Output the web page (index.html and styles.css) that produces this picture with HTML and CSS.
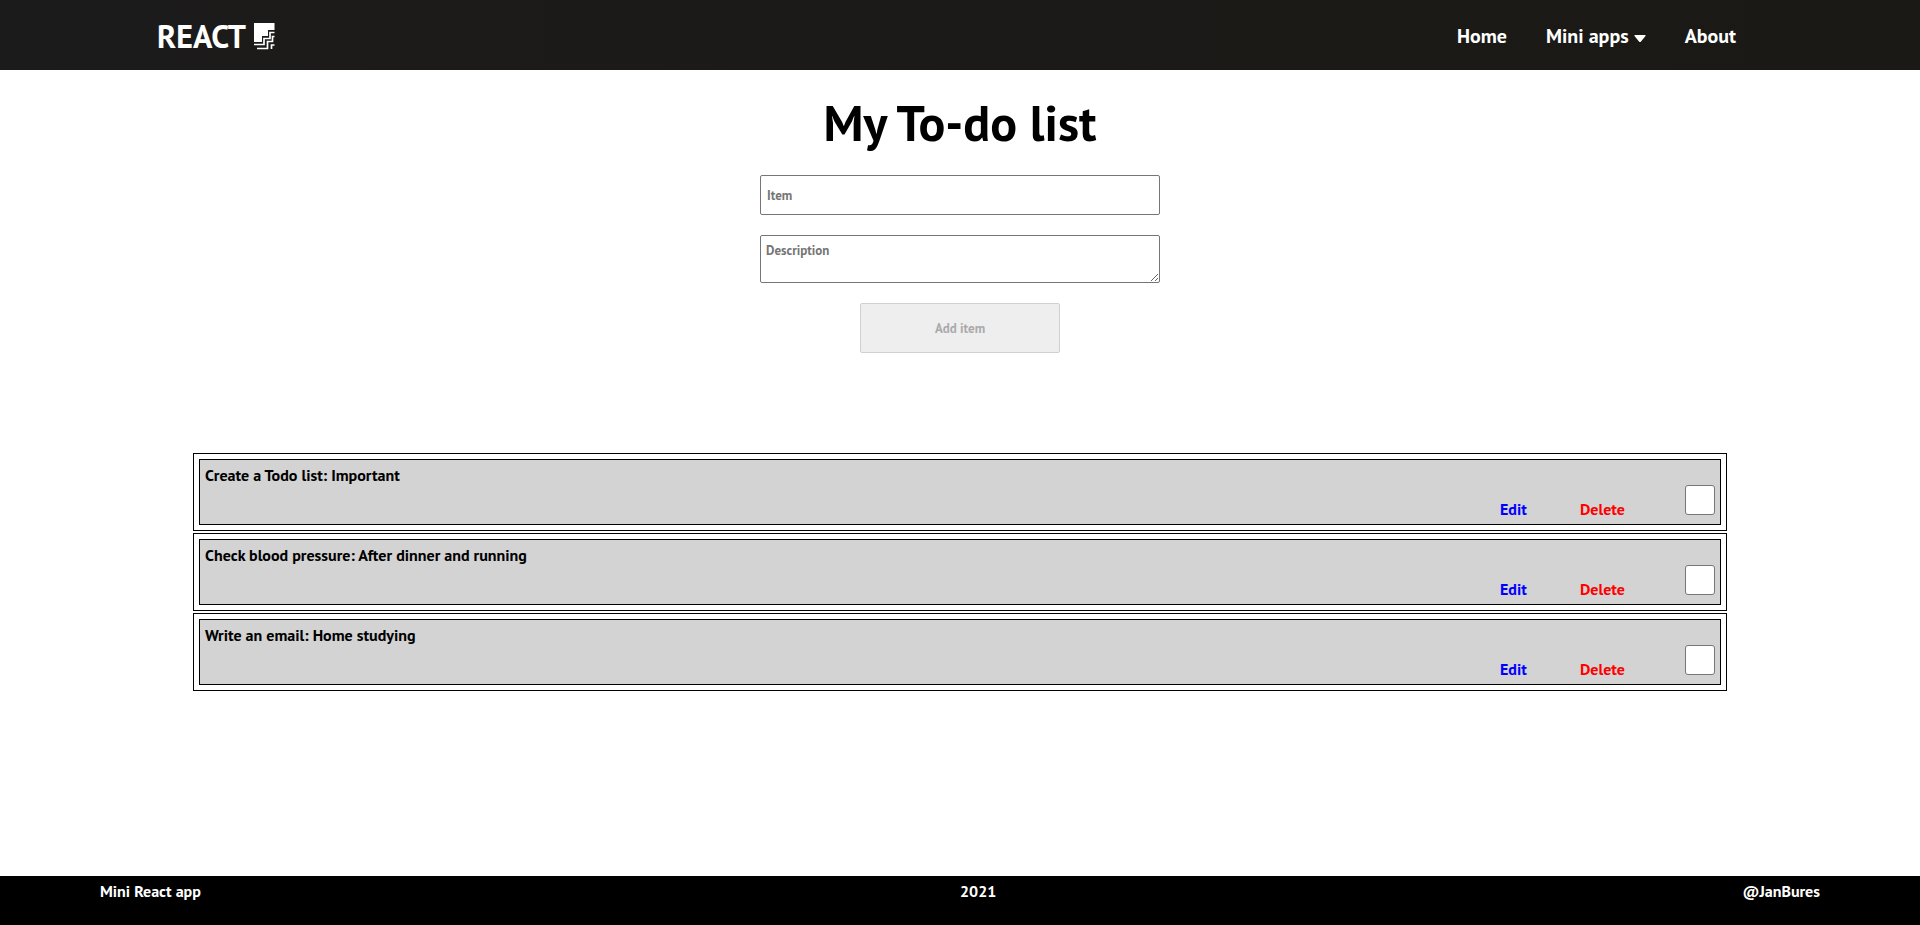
FILE: index.html
```html
<!DOCTYPE html>
<html lang="en">
<head>
<meta charset="utf-8">
<meta name="viewport" content="width=device-width, initial-scale=1">
<title>My To-do list</title>
<link rel="stylesheet" href="styles.css">
</head>
<body>
<header class="navbar">
  <a class="logo" href="#">REACT
    <svg class="logo-icon" viewBox="0 0 21 27" aria-hidden="true">
      <path fill="#fff" d="M0 0h20.500v7H14v6H8v6H0z"/>
      <path fill="none" stroke="#fff" stroke-width="1.700" d="M0 21.500h10v-6h6V9.500h4.500M3 25.500h10.500v-7h5v-5h2M17.500 26v-4h3"/>
    </svg>
  </a>
  <nav>
    <ul class="menu">
      <li><a href="#">Home</a></li>
      <li><a href="#">Mini apps <svg class="caret" viewBox="0 0 12 7" aria-hidden="true"><path d="M1 0h10q1 0 .5 1L7 6.500q-1 1-2 0L.5 1Q0 0 1 0z"/></svg></a></li>
      <li><a href="#">About</a></li>
    </ul>
  </nav>
</header>
<main class="content">
  <h1 class="title">My To-do list</h1>
  <form class="todo-form">
    <input class="field" type="text" placeholder="Item" aria-label="Item">
    <textarea class="field description" placeholder="Description" aria-label="Description"></textarea>
    <button class="add" type="submit" disabled>Add item</button>
  </form>
  <ul class="todos">
    <li class="todo">
      <div class="card">
        <p class="text">Create a Todo list: Important</p>
        <div class="actions">
          <button class="action edit" type="button">Edit</button>
          <button class="action delete" type="button">Delete</button>
          <input class="done" type="checkbox" aria-label="Create a Todo list done">
        </div>
      </div>
    </li>
    <li class="todo">
      <div class="card">
        <p class="text">Check blood pressure: After dinner and running</p>
        <div class="actions">
          <button class="action edit" type="button">Edit</button>
          <button class="action delete" type="button">Delete</button>
          <input class="done" type="checkbox" aria-label="Check blood pressure done">
        </div>
      </div>
    </li>
    <li class="todo">
      <div class="card">
        <p class="text">Write an email: Home studying</p>
        <div class="actions">
          <button class="action edit" type="button">Edit</button>
          <button class="action delete" type="button">Delete</button>
          <input class="done" type="checkbox" aria-label="Write an email done">
        </div>
      </div>
    </li>
  </ul>
</main>
<footer class="footer">
  <span>Mini React app</span>
  <div class="footer-end"><span>2021</span><span>@JanBures</span></div>
</footer>
</body>
</html>
```
FILE: styles.css
```css
* {
  box-sizing: border-box;
  margin: 0;
  padding: 0;
  font-family: "PT Sans", Lato, sans-serif;
  font-weight: 700;
}

body {
  display: flex;
  flex-direction: column;
  min-height: 100vh;
  font-size: 16px;
  line-height: 20px;
  color: #000;
  background: #fff;
}

ul {
  list-style: none;
}

.navbar {
  display: flex;
  align-items: center;
  justify-content: space-between;
  height: 70px;
  padding: 2px 184px 0 157px;
  background: linear-gradient(90deg, #1c1b1b 0%, #1a1915 100%);
}

.navbar a {
  color: #fff;
  text-decoration: none;
}

.logo {
  display: flex;
  align-items: center;
  gap: 8px;
  font-size: 32px;
  line-height: 40px;
}

.logo-icon {
  flex: none;
  width: 21px;
  height: 27px;
}

.menu {
  display: flex;
  gap: 39px;
  font-size: 20px;
  line-height: 24px;
}

.caret {
  width: 12px;
  height: 7px;
  fill: #fff;
  vertical-align: middle;
}

.content {
  flex: 1;
}

.title {
  margin-top: 23px;
  font-size: 50px;
  line-height: 60px;
  text-align: center;
}

.todo-form {
  display: flex;
  flex-direction: column;
  align-items: center;
  gap: 20px;
  margin-top: 22px;
}

.field {
  width: 400px;
  max-width: 90%;
  height: 40px;
  padding: 0 6px;
  border: 1px solid #767676;
  border-radius: 2px;
  font-size: 13px;
  background: #fff;
}

.field::placeholder {
  color: #757575;
}

.description {
  height: 48px;
  padding: 5px;
  line-height: 20px;
}

.add {
  width: 200px;
  height: 50px;
  border: 1px solid #d0d0d0;
  border-radius: 2px;
  font-size: 13px;
  color: #aaa;
  background: #eee;
}

.todos {
  width: 80%;
  margin: 100px auto 0;
}

.todo {
  margin: 1px;
  padding: 5px;
  border: 1px solid #000;
}

.todo + .todo {
  margin-top: 2px;
}

.card {
  padding: 5px;
  border: 1px solid #000;
  background: #d3d3d3;
}

.text {
  height: 20px;
}

.actions {
  display: flex;
  align-items: flex-end;
  justify-content: flex-end;
  height: 34px;
}

.action {
  width: 80px;
  border: 0;
  font-size: 16px;
  line-height: 20px;
  text-align: left;
  background: none;
  cursor: pointer;
}

.edit {
  color: #00f;
}

.delete {
  width: 105px;
  color: #f00;
}

.done {
  width: 30px;
  height: 30px;
  margin-bottom: 4px;
  appearance: none;
  border: 1px solid #767676;
  border-radius: 3px;
  background: #fff;
}

.done:checked {
  background: #0075ff;
}

.footer {
  display: grid;
  grid-template-columns: 1fr 1fr;
  height: 49px;
  padding: 5px 100px 0;
  color: #fff;
  background: #000;
}

.footer-end {
  display: flex;
  justify-content: space-between;
}
```
